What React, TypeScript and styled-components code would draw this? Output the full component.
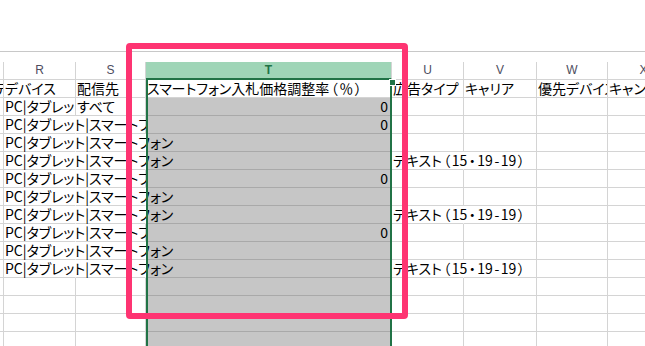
import React from "react";
import styled, { createGlobalStyle, css } from "styled-components";

const GRID = "#d4d4d4";
const SEL_FILL = "#c6c6c6";
const SEL_LINE = "#a9a9a9";
const EXCEL_GREEN = "#217346";

const GlobalStyle = createGlobalStyle`
  html, body { margin: 0; padding: 0; background: #ffffff; }
  body {
    font-family: "Noto Sans CJK JP", "Liberation Sans", sans-serif;
    color: #000000;
  }
`;

type CellSpec = {
  text?: string;
  clip?: number;
  open?: boolean;
  align?: "left" | "right";
};

type ColumnSpec = {
  letter: string;
  width: number;
  selected?: boolean;
  cells: CellSpec[];
};

const ROWS = 15;
const DEVICE = "PC|タブレット|スマートフォン";
const AD_TYPE = "テキスト（15・19-19）";

const fill = (entries: Record<number, CellSpec>): CellSpec[] =>
  Array.from({ length: ROWS }, (_, i) => entries[i] ?? {});

const rowsOf = (rows: number[], spec: CellSpec): Record<number, CellSpec> =>
  Object.fromEntries(rows.map((r) => [r, spec]));

const blockedRows = [2, 5, 8];
const spillRows = [3, 4, 6, 7, 9, 10];

const COLUMNS: ColumnSpec[] = [
  { letter: "Q", width: 72, cells: fill({ 0: { text: "ターゲットデバイス", clip: 70 } }) },
  {
    letter: "R",
    width: 72,
    cells: fill({
      0: { text: "デバイス" },
      1: { text: DEVICE, clip: 70 },
      ...rowsOf(blockedRows, { text: DEVICE, clip: 141, open: true }),
      ...rowsOf(spillRows, { text: DEVICE, open: true }),
    }),
  },
  {
    letter: "S",
    width: 70,
    cells: fill({
      0: { text: "配信先" },
      1: { text: "すべて" },
      ...rowsOf(spillRows, { open: true }),
    }),
  },
  {
    letter: "T",
    width: 246,
    selected: true,
    cells: fill({
      0: { text: "スマートフォン入札価格調整率（％）" },
      ...rowsOf([1, 2, 5, 8], { text: "0", align: "right" }),
    }),
  },
  {
    letter: "U",
    width: 72,
    cells: fill({
      0: { text: "広告タイプ" },
      ...rowsOf([4, 7, 10], { text: AD_TYPE, open: true }),
    }),
  },
  { letter: "V", width: 73, cells: fill({ 0: { text: "キャリア" } }) },
  { letter: "W", width: 71, cells: fill({ 0: { text: "優先デバイス", clip: 69 } }) },
  { letter: "X", width: 72, cells: fill({ 0: { text: "キャンペーン名" } }) },
];

const Frame = styled.div`
  position: relative;
  width: 645px;
  height: 346px;
  overflow: hidden;
  background: #ffffff;
`;

const FormulaStrip = styled.div`
  height: 51px;
  border-bottom: 1px solid #c8c8c8;
`;

const Sheet = styled.div`
  display: flex;
  align-items: flex-start;
  margin: 10px 0 0 -68px;
`;

const Column = styled.div<{ $width: number }>`
  flex: 0 0 ${(p) => p.$width}px;
  width: ${(p) => p.$width}px;
`;

const ColumnHead = styled.div<{ $active?: boolean }>`
  box-sizing: border-box;
  height: 18px;
  border-right: 1px solid ${GRID};
  border-bottom: ${(p) => (p.$active ? `2px solid ${EXCEL_GREEN}` : `1px solid ${GRID}`)};
  background: ${(p) => (p.$active ? "#9fd5b7" : "#ffffff")};
  color: ${(p) => (p.$active ? EXCEL_GREEN : "#4d4d5e")};
  font-family: "Liberation Sans", Arial, sans-serif;
  font-size: 12px;
  font-weight: ${(p) => (p.$active ? 700 : 400)};
  line-height: 16px;
  text-align: center;
`;

const ColumnBody = styled.div<{ $selected?: boolean }>`
  position: relative;
  ${(p) =>
    p.$selected &&
    css`
      &::after {
        content: "";
        position: absolute;
        inset: 0;
        border-left: 2px solid ${EXCEL_GREEN};
        border-right: 2px solid ${EXCEL_GREEN};
        z-index: 2;
        pointer-events: none;
      }
    `}
`;

const FillHandle = styled.span`
  position: absolute;
  top: 0;
  right: -3px;
  width: 5px;
  height: 5px;
  background: ${EXCEL_GREEN};
  box-shadow: 0 0 0 1px #ffffff;
  z-index: 3;
`;

const Cell = styled.div<{ $shade?: boolean; $open?: boolean; $align?: string }>`
  box-sizing: border-box;
  height: 18px;
  padding: 0 3px 0 1px;
  border-right: 1px solid ${(p) => (p.$open ? "transparent" : GRID)};
  border-bottom: 1px solid ${(p) => (p.$shade ? SEL_LINE : GRID)};
  background: ${(p) => (p.$shade ? SEL_FILL : "transparent")};
  font-size: 14px;
  line-height: 17px;
  text-align: ${(p) => p.$align ?? "left"};
  white-space: nowrap;
  font-feature-settings: "palt";
`;

const CellText = styled.span<{ $clip?: number }>`
  position: relative;
  z-index: 1;
  display: block;
  ${(p) =>
    p.$clip !== undefined &&
    css`
      width: ${p.$clip}px;
      overflow: hidden;
    `}
`;

/* brackets, middle dots and dashes sit a little looser than the kana around them */
const Punct = styled.span`
  margin: 0 1.5px;
`;

const PUNCT = /([（）・\-])/;

function renderText(text: string) {
  return text.split(PUNCT).map((part, i) =>
    PUNCT.test(part) && part.length === 1 ? <Punct key={i}>{part}</Punct> : part
  );
}

const Callout = styled.div`
  position: absolute;
  left: 126px;
  top: 43px;
  width: 282px;
  height: 276px;
  box-sizing: border-box;
  border: 6px solid #fe3472;
  border-radius: 4px;
  z-index: 5;
  pointer-events: none;
`;

export default function App() {
  return (
    <>
      <GlobalStyle />
      <Frame>
        <FormulaStrip />
        <Sheet>
          {COLUMNS.map((col) => (
            <Column key={col.letter} $width={col.width}>
              <ColumnHead $active={col.selected}>{col.letter}</ColumnHead>
              <ColumnBody $selected={col.selected}>
                {col.selected && <FillHandle />}
                {col.cells.map((cell, i) => (
                  <Cell
                    key={i}
                    $shade={col.selected && i > 0}
                    $open={cell.open}
                    $align={cell.align}
                  >
                    {cell.text && (
                      <CellText $clip={cell.clip}>{renderText(cell.text)}</CellText>
                    )}
                  </Cell>
                ))}
              </ColumnBody>
            </Column>
          ))}
        </Sheet>
        <Callout />
      </Frame>
    </>
  );
}
